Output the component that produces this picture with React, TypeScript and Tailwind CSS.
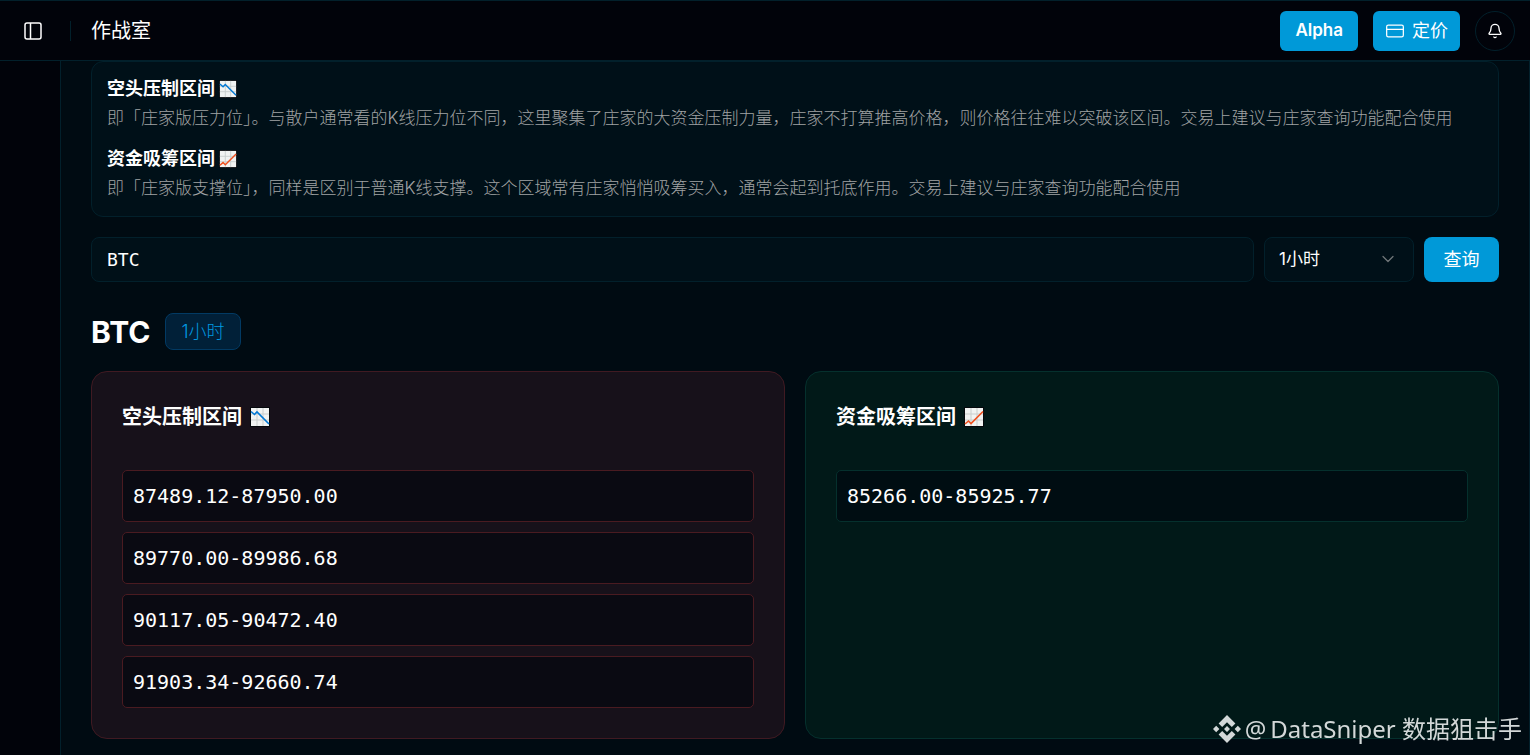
import React, { useState } from "react";
import { Bell, ChevronDown, CreditCard } from "lucide-react";

interface Zone {
  id: string;
  title: string;
  description: string;
  trend: "up" | "down";
  ranges: string[];
}

const zones: Zone[] = [
  {
    id: "pressure",
    title: "空头压制区间",
    description:
      "即「庄家版压力位」。与散户通常看的K线压力位不同，这里聚集了庄家的大资金压制力量，庄家不打算推高价格，则价格往往难以突破该区间。交易上建议与庄家查询功能配合使用",
    trend: "down",
    ranges: [
      "87489.12-87950.00",
      "89770.00-89986.68",
      "90117.05-90472.40",
      "91903.34-92660.74",
    ],
  },
  {
    id: "support",
    title: "资金吸筹区间",
    description:
      "即「庄家版支撑位」，同样是区别于普通K线支撑。这个区域常有庄家悄悄吸筹买入，通常会起到托底作用。交易上建议与庄家查询功能配合使用",
    trend: "up",
    ranges: ["85266.00-85925.77"],
  },
];

const periods = ["1小时", "4小时", "1天"];

// Card and row colors per trend
const cardColors = {
  down: "border-[#401a22] bg-[#17111a]",
  up: "border-[#05302d] bg-[#011918]",
};

const rowColors = {
  down: "border-[#4a1b21] bg-[#0a0a12]",
  up: "border-[#05302d] bg-[#000d12]",
};

function TrendIcon({ trend, className }: { trend: "up" | "down"; className: string }) {
  return (
    <svg viewBox="0 0 20 20" className={className} aria-hidden="true">
      <rect width="20" height="20" fill="#05080c" />
      <rect x="1" y="1" width="18" height="18" fill="#f1f3f2" />
      <path d="M7 1v18M13 1v18M1 7h18M1 13h18" stroke="#c9cecd" strokeWidth="1" />
      {trend === "down" ? (
        <path d="M1 4.5l3.5 3L7 5l12 12" fill="none" stroke="#0078d4" strokeWidth="1.6" />
      ) : (
        <path d="M1 17l3.5-3L7 16.500l12-12" fill="none" stroke="#f0501e" strokeWidth="1.6" />
      )}
    </svg>
  );
}

function PanelIcon() {
  return (
    <svg
      viewBox="0 0 18 18"
      className="size-[18px]"
      fill="none"
      stroke="currentColor"
      strokeWidth="1.5"
      aria-hidden="true"
    >
      <rect x="1" y="1" width="16" height="16" rx="2" />
      <path d="M6.5 1v16" />
    </svg>
  );
}

function Watermark() {
  return (
    <div className="pointer-events-none fixed right-2 bottom-2 flex items-center gap-1 font-['Noto_Sans','Noto_Sans_CJK_SC',sans-serif] text-2xl leading-9 text-[#d3d8d8]">
      <svg viewBox="0 0 28 28" className="size-7" fill="currentColor" aria-hidden="true">
        <path d="M14 0l8.400 8.400-3.600 3.600L14 7.200l-4.800 4.800-3.600-3.600z" />
        <path d="M14 28l8.400-8.400-3.600-3.600-4.800 4.800-4.800-4.800-3.600 3.600z" />
        <path d="M14 11l3 3-3 3-3-3zM3.200 10.800L6.400 14l-3.200 3.200L0 14zM24.800 10.800L28 14l-3.200 3.200-3.200-3.200z" />
      </svg>
      <span className="flex gap-1">
        <span>@</span>
        <span>DataSniper 数据狙击手</span>
      </span>
    </div>
  );
}

export default function App() {
  const [symbol, setSymbol] = useState("BTC");
  const [period, setPeriod] = useState(periods[0]);

  return (
    <div className="flex h-screen flex-col overflow-hidden bg-[#01030a] font-['Inter','Noto_Sans_CJK_SC',sans-serif] text-[17px] text-white">
      {/* Top bar */}
      <header className="flex h-[61px] shrink-0 items-center border-y border-[#02202b] px-[15px]">
        <button type="button" aria-label="Toggle sidebar" className="flex size-9 items-center justify-center">
          <PanelIcon />
        </button>
        <div className="ml-[19px] h-5 w-px bg-[#02202b]" />
        <h1 className="ml-5 text-xl">作战室</h1>
        <div className="ml-auto flex items-center gap-[15px]">
          <button type="button" className="h-10 rounded-md bg-[#0099d8] px-[15px] font-semibold">
            Alpha
          </button>
          <button type="button" className="flex h-10 items-center gap-[7px] rounded-md bg-[#0099d8] px-3 text-lg">
            <CreditCard className="size-5" strokeWidth={1.5} />
            定价
          </button>
          <button
            type="button"
            aria-label="Notifications"
            className="flex size-10 items-center justify-center rounded-full border border-[#02202b]"
          >
            <Bell className="size-4" />
          </button>
        </div>
      </header>

      <main className="ml-15 flex-1 overflow-hidden border-x border-[#02202b] bg-[#000b12] px-[30px]">
        {/* What the two zones mean */}
        <section className="flex flex-col gap-2.5 rounded-xl border border-[#02202b] bg-[#001018] px-[15px] py-3">
          {zones.map((zone) => (
            <div key={zone.id}>
              <h2 className="flex h-[29px] items-center gap-1 text-lg font-bold">
                {zone.title}
                <TrendIcon trend={zone.trend} className="size-[18px]" />
              </h2>
              <p className="h-[31px] leading-[30px] font-light text-[#a0a3a4]">{zone.description}</p>
            </div>
          ))}
        </section>

        <form className="mt-5 flex gap-2.5" onSubmit={(e) => e.preventDefault()}>
          <input
            aria-label="Symbol"
            value={symbol}
            onChange={(e) => setSymbol(e.target.value)}
            className="h-[45px] min-w-0 flex-1 rounded-lg border border-[#02202b] bg-[#001018] px-[15px] font-['DejaVu_Sans_Mono',monospace] text-lg"
          />
          <div className="relative w-[150px]">
            <select
              aria-label="Period"
              value={period}
              onChange={(e) => setPeriod(e.target.value)}
              className="h-[45px] w-full appearance-none rounded-lg border border-[#02202b] bg-[#001018] px-3.5 text-[17px]"
            >
              {periods.map((item) => (
                <option key={item} value={item}>
                  {item}
                </option>
              ))}
            </select>
            <ChevronDown
              className="pointer-events-none absolute top-3 right-4 size-5 text-[#6f7679]"
              strokeWidth={1.5}
            />
          </div>
          <button type="submit" className="h-[45px] w-[75px] rounded-lg bg-[#0099d8] text-lg">
            查询
          </button>
        </form>

        <div className="mt-[31px] flex items-center gap-[15px]">
          <h2 className="text-3xl font-bold">BTC</h2>
          <span className="flex h-[37px] items-center rounded-lg border border-[#023a63] bg-[#012038] px-[15px] text-lg font-light text-[#0099e0]">
            {period}
          </span>
        </div>

        <div className="mt-[21px] grid grid-cols-2 gap-5">
          {zones.map((zone) => (
            <section key={zone.id} className={`rounded-2xl border p-[30px] ${cardColors[zone.trend]}`}>
              <h3 className="flex h-[30px] items-center gap-2 text-xl font-bold">
                {zone.title}
                <TrendIcon trend={zone.trend} className="size-5" />
              </h3>
              <ul className="mt-[38px] flex flex-col gap-2.5">
                {zone.ranges.map((range) => (
                  <li
                    key={range}
                    className={`flex h-[52px] items-center rounded-[5px] border px-2.5 font-['DejaVu_Sans_Mono',monospace] text-xl ${rowColors[zone.trend]}`}
                  >
                    {range}
                  </li>
                ))}
              </ul>
            </section>
          ))}
        </div>
      </main>

      <Watermark />
    </div>
  );
}
